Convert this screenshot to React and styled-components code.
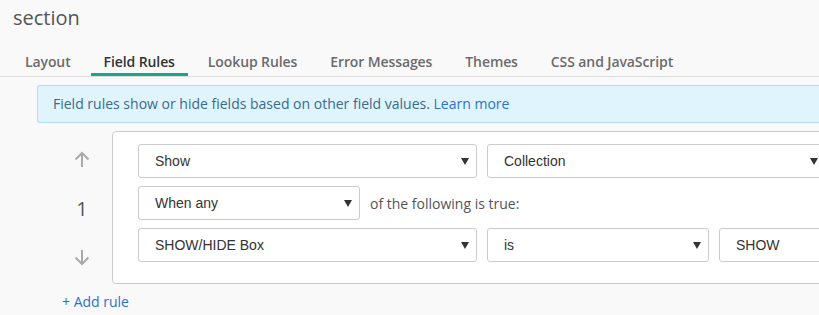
import React from 'react'
import styled, {createGlobalStyle} from 'styled-components'

const GlobalStyle = createGlobalStyle`
    html, body {
        margin: 0;
        padding: 0;
        background: #f9f9f9;
        overflow: hidden;
    }
    body {
        width: 819px;
        font-family: "Open Sans", sans-serif;
    }
`;

const tabs = ["Layout", "Field Rules", "Lookup Rules", "Error Messages", "Themes", "CSS and JavaScript"];

function Arrow({up}) {
    return (
        <svg width="16" height="17" viewBox="0 0 16 17" fill="none" stroke="#aaa" strokeWidth="2">
            {up ? (
                <>
                    <path d="M8 16V2" />
                    <path d="M1.5 8.5L8 2l6.5 6.5" />
                </>
            ) : (
                <>
                    <path d="M8 1v14" />
                    <path d="M1.5 8.5L8 15l6.5-6.5" />
                </>
            )}
        </svg>
    )
}

function Select({width, value, noCaret}) {
    return (
        <SelectBox width={width}>
            <span>{value}</span>
            {!noCaret && <Caret />}
        </SelectBox>
    )
}

export default function App() {
    return (
        <>
            <GlobalStyle />
            <Page>
                <Title>section</Title>
                <TabBar>
                    {tabs.map((t) => (
                        <Tab key={t} active={t === "Field Rules"}>{t}</Tab>
                    ))}
                </TabBar>
                <Info>
                    Field rules show or hide fields based on other field values. <Link>Learn more</Link>
                </Info>
                <RuleRow>
                    <Mover>
                        <Arrow up />
                        <Number>1</Number>
                        <Arrow />
                    </Mover>
                    <Card>
                        <Line>
                            <Select width={339} value="Show" />
                            <Select width={339} value="Collection" />
                        </Line>
                        <Line>
                            <Select width={222} value="When any" />
                            <Plain>of the following is true:</Plain>
                        </Line>
                        <Line>
                            <Select width={339} value="SHOW/HIDE Box" />
                            <Select width={222} value="is" />
                            <Select width={222} value="SHOW" noCaret />
                        </Line>
                    </Card>
                </RuleRow>
                <AddRule>+ Add rule</AddRule>
            </Page>
        </>
    )
}

const Page = styled.div`
    width: 819px;
    height: 315px;
    overflow: hidden;
`;
const Title = styled.h1`
    margin: 4px 0 0 13px;
    font-size: 20px;
    line-height: 28px;
    font-weight: 400;
    color: #555;
`;
const TabBar = styled.div`
    display: flex;
    gap: 7px;
    margin-top: 20px;
    padding-left: 12px;
    border-bottom: 1px solid #ddd;
`;
const Tab = styled.div`
    padding: 0 13px 1px;
    font-size: 14px;
    line-height: 20px;
    font-weight: 600;
    letter-spacing: -0.1px;
    white-space: nowrap;
    color: ${(p) => (p.active ? "#333" : "#6b6b6b")};
    border-bottom: 3px solid ${(p) => (p.active ? "#17a689" : "transparent")};
`;
const Info = styled.div`
    margin: 8px 0 0 37px;
    width: 820px;
    height: 38px;
    padding-left: 15px;
    box-sizing: border-box;
    border: 1px solid #b1def5;
    border-right: none;
    border-radius: 3px 0 0 3px;
    background: #dff4fd;
    color: #3a6a8c;
    font-size: 14px;
    line-height: 35px;
    white-space: nowrap;
`;
const Link = styled.span`
    color: #2b72cc;
`;
const RuleRow = styled.div`
    display: flex;
    gap: 10px;
    margin-top: 8px;
    padding-left: 62px;
`;
const Mover = styled.div`
    width: 40px;
    flex: none;
    display: flex;
    flex-direction: column;
    align-items: center;
    justify-content: space-between;
    padding: 20px 0 18px;
`;
const Number = styled.div`
    font-size: 20px;
    line-height: 24px;
    color: #555;
`;
const Card = styled.div`
    flex: none;
    width: 900px;
    box-sizing: border-box;
    padding: 12px 25px 21px;
    background: #fff;
    border: 1px solid #ccc;
    border-radius: 4px;
    display: flex;
    flex-direction: column;
    gap: 8px;
`;
const Line = styled.div`
    display: flex;
    align-items: center;
    gap: 10px;
`;
const SelectBox = styled.div`
    flex: none;
    position: relative;
    width: ${(p) => p.width}px;
    height: 34px;
    box-sizing: border-box;
    padding-left: 16px;
    border: 1px solid #ccc;
    border-radius: 3px;
    background: #fff;
    font-family: "Liberation Sans", Arial, sans-serif;
    font-size: 14px;
    line-height: 32px;
    color: #333;
`;
const Caret = styled.i`
    position: absolute;
    right: 7px;
    top: 13px;
    width: 0;
    height: 0;
    border-left: 4px solid transparent;
    border-right: 4px solid transparent;
    border-top: 7px solid #333;
`;
const Plain = styled.span`
    font-size: 14px;
    color: #555;
`;
const AddRule = styled.div`
    margin: 8px 0 0 62px;
    font-size: 14px;
    line-height: 20px;
    color: #2b72cc;
`;
